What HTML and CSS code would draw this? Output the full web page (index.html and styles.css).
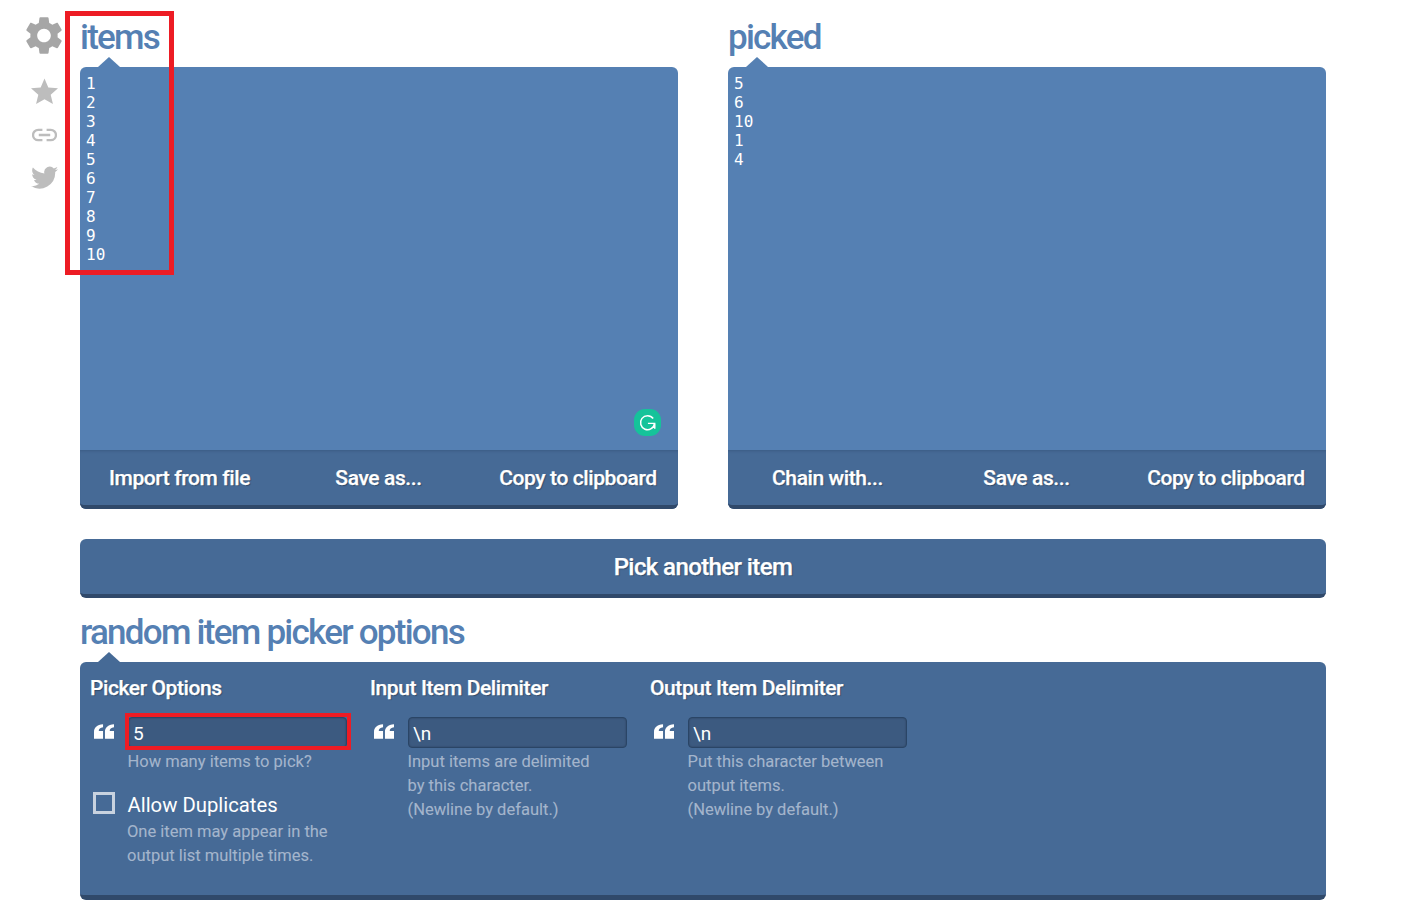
FILE: index.html
```html
<!DOCTYPE html>
<html lang="en">
<head>
<meta charset="utf-8">
<title>Random Item Picker</title>
<link rel="stylesheet" href="styles.css">
</head>
<body>
<nav class="side">
  <svg class="ic-gear" viewBox="2.500 2.300 19 19.400"><path fill="#a6a6a6" d="M19.140,12.940c0.040-0.300,0.060-0.610,0.060-0.940c0-0.320-0.020-0.640-0.070-0.940l2.030-1.580c0.180-0.140,0.230-0.410,0.120-0.610l-1.920-3.320c-0.120-0.220-0.370-0.290-0.590-0.220l-2.390,0.960c-0.500-0.380-1.030-0.700-1.620-0.940L14.400,2.810c-0.040-0.240-0.240-0.410-0.480-0.410h-3.840c-0.240,0-0.430,0.170-0.470,0.410L9.250,5.350C8.660,5.590,8.120,5.920,7.630,6.290L5.240,5.330c-0.220-0.080-0.470,0-0.590,0.220L2.740,8.870C2.620,9.080,2.660,9.340,2.860,9.480l2.030,1.580C4.840,11.360,4.800,11.690,4.800,12s0.020,0.640,0.070,0.940l-2.030,1.580c-0.180,0.140-0.230,0.410-0.120,0.610l1.920,3.320c0.120,0.220,0.370,0.290,0.590,0.220l2.390-0.960c0.500,0.380,1.030,0.700,1.620,0.940l0.360,2.540c0.050,0.240,0.240,0.410,0.480,0.410h3.840c0.240,0,0.440-0.170,0.470-0.410l0.360-2.540c0.590-0.240,1.130-0.560,1.620-0.940l2.390,0.960c0.220,0.080,0.470,0,0.590-0.220l1.920-3.320c0.120-0.220,0.070-0.470-0.120-0.610L19.140,12.940z M12,15.600c-1.980,0-3.600-1.620-3.600-3.600s1.620-3.600,3.600-3.600s3.600,1.620,3.600,3.600S13.980,15.600,12,15.600z"/></svg>
  <svg class="ic-star" viewBox="0 0 24 24"><path fill="#bdbdbd" d="M12 .5l3.400 7.900 8.600.8-6.500 5.600 2 8.400L12 18.800l-7.500 4.400 2-8.400L0 9.200l8.600-.8z"/></svg>
  <svg class="ic-link" viewBox="0 0 24 13"><path fill="none" stroke="#bdbdbd" stroke-width="2.200" d="M10 1.500H6a5 5 0 0 0 0 10h4M14 1.500h4a5 5 0 0 1 0 10h-4M6.500 6.500h11"/></svg>
  <svg class="ic-bird" viewBox="0 0 24 20"><path fill="#bdbdbd" d="M24 2.600c-.9.400-1.800.7-2.800.8 1-.6 1.800-1.600 2.200-2.700-1 .6-2 1-3.100 1.200A4.900 4.900 0 0 0 11.900 6.400C7.800 6.200 4.200 4.200 1.700 1.200c-1.300 2.200-.7 5.100 1.500 6.600-.8 0-1.600-.2-2.200-.6 0 2.300 1.600 4.400 3.900 4.900-.7.200-1.500.2-2.200.1.600 2 2.400 3.400 4.600 3.400A9.900 9.900 0 0 1 0 17.600 14 14 0 0 0 21.500 5.200c1-.7 1.900-1.600 2.500-2.600z"/></svg>
</nav>
<main class="page">
  <section class="columns">
    <div class="col">
      <h1 class="title">items</h1>
      <div class="panel">
        <pre class="list">1
2
3
4
5
6
7
8
9
10</pre>
        <span class="grammarly"><svg viewBox="0 0 24 24"><path fill="none" stroke="#fff" stroke-width="1.700" d="M18.500 7.500A8 8 0 1 0 20 13M12.500 13H21M20.300 13v6"/></svg></span>
        <div class="bar">
          <span class="act">Import from file</span>
          <span class="act">Save as...</span>
          <span class="act">Copy to clipboard</span>
        </div>
      </div>
    </div>
    <div class="col">
      <h1 class="title">picked</h1>
      <div class="panel">
        <pre class="list">5
6
10
1
4</pre>
        <div class="bar">
          <span class="act">Chain with...</span>
          <span class="act">Save as...</span>
          <span class="act">Copy to clipboard</span>
        </div>
      </div>
    </div>
  </section>
  <div class="pick">Pick another item</div>
  <h1 class="title title-opts">random item picker options</h1>
  <section class="options">
    <div class="group">
      <h2>Picker Options</h2>
      <div class="field">
        <svg class="quote" viewBox="0 0 21 15"><path fill="#fff" d="M0 15V8C0 3.500 3 .5 9.500 0V3C6.500 3.300 5 4.800 5 7H9.500V15ZM11.500 15V8C11.500 3.500 14.500 .5 21 0V3C18 3.300 16.500 4.800 16.500 7H21V15Z"/></svg>
        <div class="fbody">
          <div class="input">5</div>
          <p class="hint">How many items to pick?</p>
        </div>
      </div>
      <div class="field check">
        <span class="box"></span>
        <div class="fbody">
          <div class="clabel">Allow Duplicates</div>
          <p class="hint">One item may appear in the<br>output list multiple times.</p>
        </div>
      </div>
    </div>
    <div class="group">
      <h2>Input Item Delimiter</h2>
      <div class="field">
        <svg class="quote" viewBox="0 0 21 15"><path fill="#fff" d="M0 15V8C0 3.500 3 .5 9.500 0V3C6.500 3.300 5 4.800 5 7H9.500V15ZM11.500 15V8C11.500 3.500 14.500 .5 21 0V3C18 3.300 16.500 4.800 16.500 7H21V15Z"/></svg>
        <div class="fbody">
          <div class="input">\n</div>
          <p class="hint">Input items are delimited<br>by this character.<br>(Newline by default.)</p>
        </div>
      </div>
    </div>
    <div class="group">
      <h2>Output Item Delimiter</h2>
      <div class="field">
        <svg class="quote" viewBox="0 0 21 15"><path fill="#fff" d="M0 15V8C0 3.500 3 .5 9.500 0V3C6.500 3.300 5 4.800 5 7H9.500V15ZM11.500 15V8C11.500 3.500 14.500 .5 21 0V3C18 3.300 16.500 4.800 16.500 7H21V15Z"/></svg>
        <div class="fbody">
          <div class="input">\n</div>
          <p class="hint">Put this character between<br>output items.<br>(Newline by default.)</p>
        </div>
      </div>
    </div>
  </section>
</main>
<div class="mark mark-items"></div>
<div class="mark mark-five"></div>
</body>
</html>
```
FILE: styles.css
```css
* { box-sizing: border-box; }
html, body { margin: 0; padding: 0; background: #fff; }
body { font-family: Roboto, "Liberation Sans", sans-serif; color: #fff; height: 919px; overflow: hidden; position: relative; }

.side { position: absolute; left: 26px; top: 17px; width: 36px; display: flex; flex-direction: column; align-items: center; }
.ic-gear { width: 36px; height: 37px; flex: none; }
.ic-star { width: 27px; height: 27px; margin-top: 24px; }
.ic-link { width: 25px; height: 14px; margin-top: 23px; }
.ic-bird { width: 27px; height: 23px; margin-top: 24px; }

.page { margin-left: 80px; width: 1246px; }
.columns { display: flex; gap: 50px; }
.col { width: 598px; }
.title { margin: 0; height: 67px; padding-top: 17px; font-size: 35px; line-height: 42px; font-weight: 500; color: #5580b3; letter-spacing: -1.75px; }

.panel { position: relative; height: 442px; background: #5580b3; border-radius: 6px; display: flex; flex-direction: column; }
.panel::before, .options::before { content: ""; position: absolute; left: 18px; top: -10px; border-left: 11px solid transparent; border-right: 11px solid transparent; border-bottom: 10px solid #5580b3; }
.options::before { border-bottom-color: #466a96; }
.list { margin: 0; flex: 1; padding: 7px 6px; font-family: "DejaVu Sans Mono", monospace; font-size: 16px; line-height: 19px; color: #fff; }
.grammarly { position: absolute; left: 554px; top: 342px; width: 27px; height: 27px; border-radius: 11px; background: #15c39a; display: flex; align-items: center; justify-content: center; }
.grammarly svg { width: 21px; height: 21px; }
.bar { height: 59px; background: #466a96; border-bottom: 4px solid #30496a; border-radius: 0 0 6px 6px; box-shadow: inset 0 3px 3px -2px #3c5c84; font-size: 21px; font-weight: 500; letter-spacing: -.4px; line-height: 56px; display: grid; grid-template-columns: 199px 199px 200px; }
.act { text-align: center; text-shadow: 1px 1px 1px rgba(0,0,0,.3); -webkit-text-stroke: .25px #fff; }

.pick { margin-top: 30px; height: 59px; background: #466a96; border-bottom: 4px solid #30496a; border-radius: 6px; text-align: center; font-size: 24px; font-weight: 500; letter-spacing: -.6px; line-height: 56px; text-shadow: 1px 1px 1px rgba(0,0,0,.3); -webkit-text-stroke: .25px #fff; }
.title-opts { height: 64px; padding-top: 14px; }

.options { position: relative; height: 238px; background: #466a96; border-bottom: 5px solid #30496a; border-radius: 6px; padding: 12px 10px; display: flex; }
.group { width: 280px; }
.group h2 { margin: 0; font-size: 21px; line-height: 28px; font-weight: 500; letter-spacing: -.4px; text-shadow: 1px 1px 1px rgba(0,0,0,.3); -webkit-text-stroke: .25px #fff; }
.field { display: flex; margin-top: 15px; }
.quote { width: 20px; height: 15px; margin: 7px 14px 0 4px; flex: none; }
.fbody { width: 219px; }
.input { height: 31px; background: #3c5a80; border: 1px solid #2a4566; border-radius: 4px; box-shadow: inset 0 0 2px rgba(0,0,0,.3); padding-left: 4px; font-size: 19px; line-height: 32px; }
.hint { margin: 2px 0 0; font-size: 16.500px; line-height: 24px; color: #a4b5cc; -webkit-text-stroke: .1px #a4b5cc; margin-left: -.5px; }
.check { margin-top: 16px; }
.box { width: 22px; height: 22px; margin: 2px 12.500px 0 3px; flex: none; border: 3px solid #c8d2df; }
.clabel { font-size: 20.300px; line-height: 30px; }
.check .hint { margin-top: 0; }

.mark { position: absolute; pointer-events: none; border-style: solid; border-color: #ed1c24; }
.mark-items { left: 65px; top: 11px; width: 109px; height: 264px; border-width: 5px; }
.mark-five { left: 125px; top: 713px; width: 226px; height: 37px; border-width: 4px; }
```
